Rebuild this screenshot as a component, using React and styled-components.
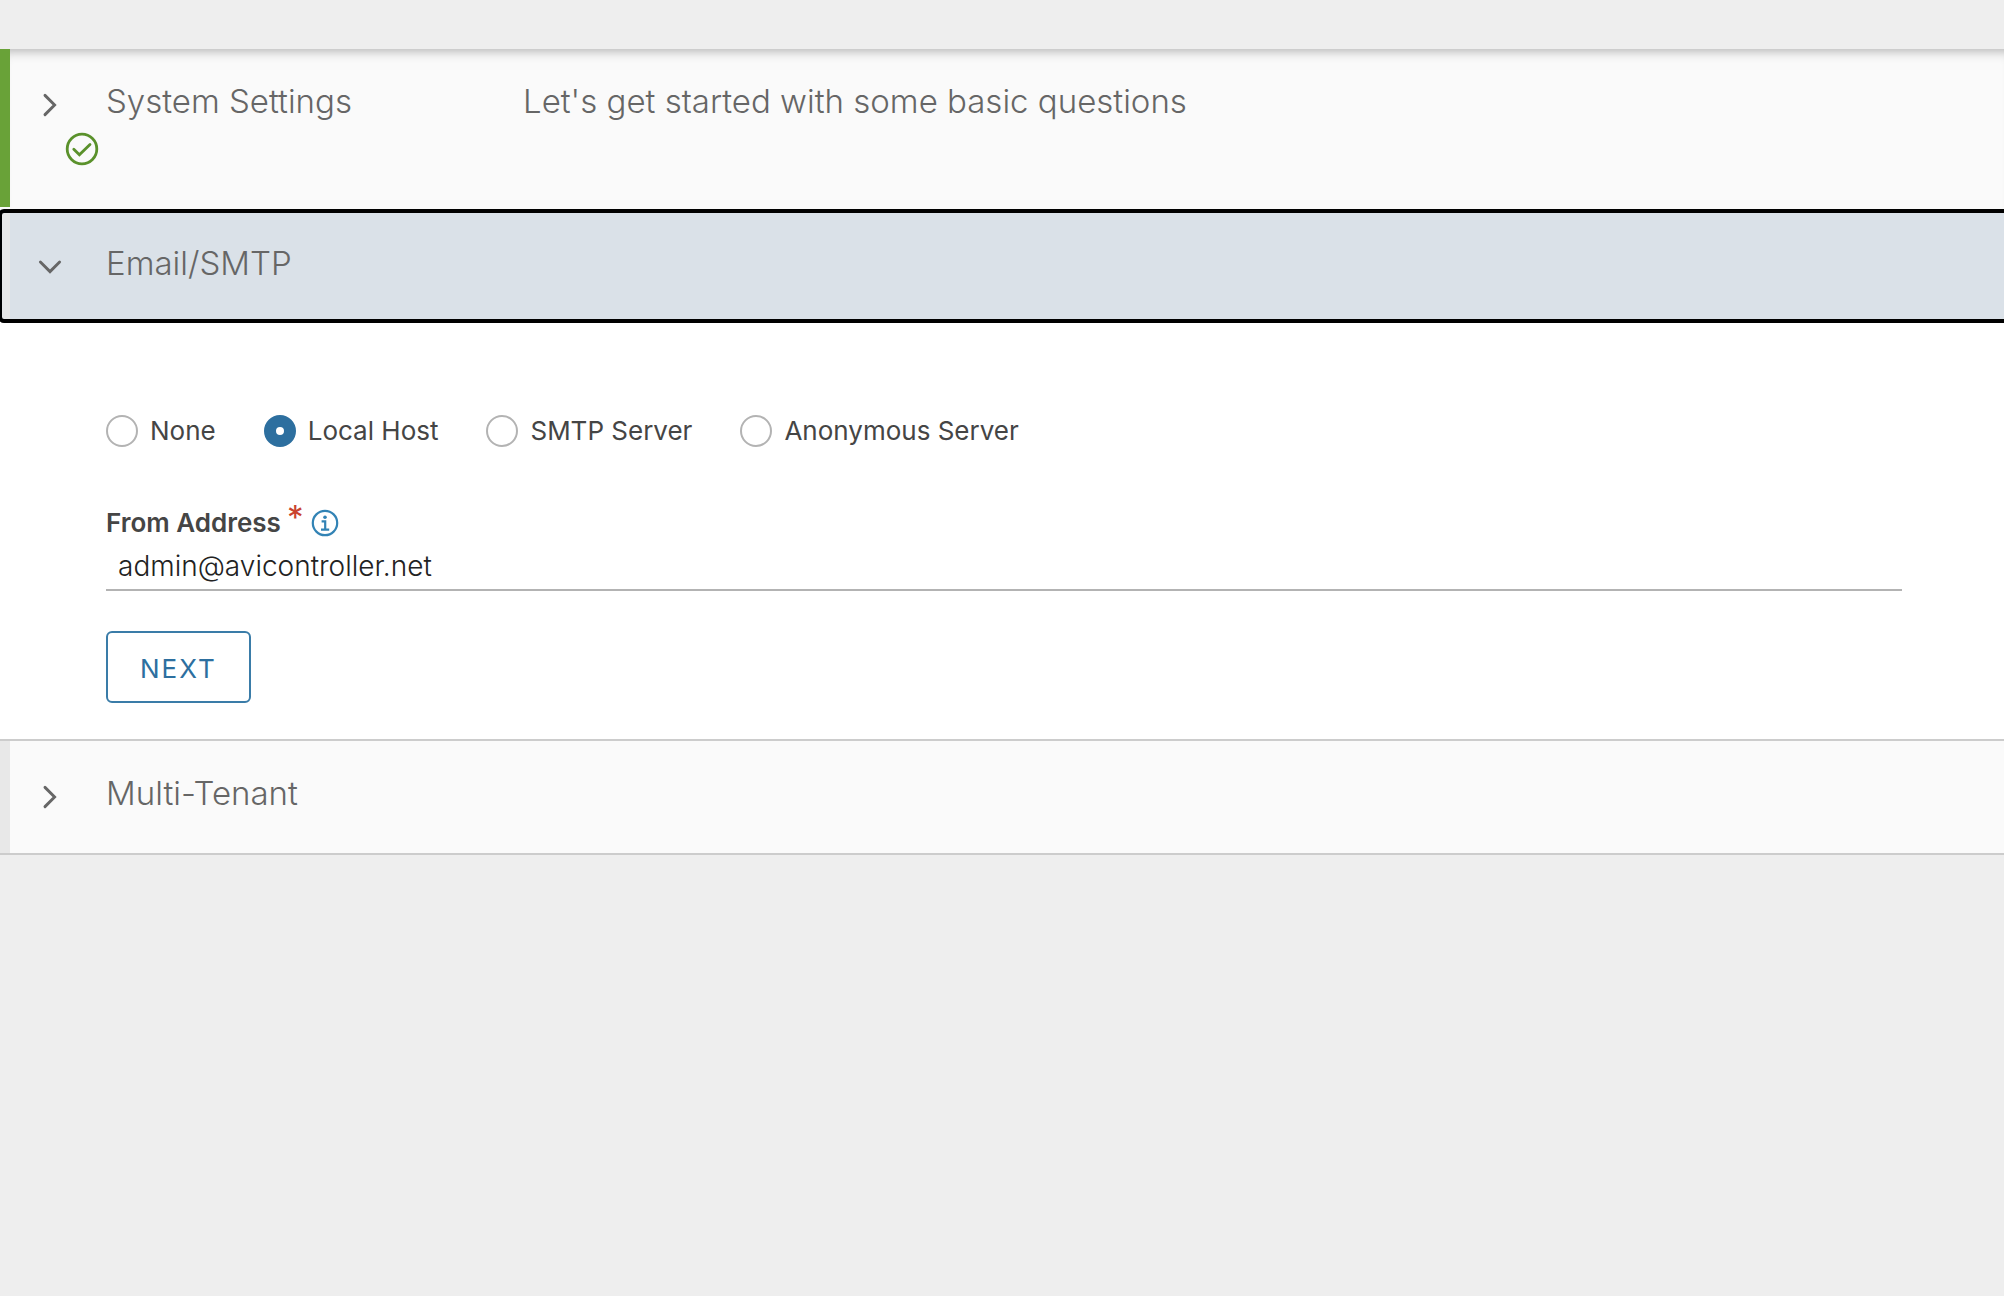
import React, { useState } from "react";
import styled, { createGlobalStyle } from "styled-components";

const GlobalStyle = createGlobalStyle`
	* {
		box-sizing: border-box;
	}

	body {
		margin: 0;
		background-color: #eeeeee;
		font-family: Inter, "Open Sans", sans-serif;
		color: #454545;
	}
`;

const StyledPage = styled.main`
	padding-top: 49px;
	overflow: hidden;
`;

const StyledPanel = styled.section`
	border-bottom: 2px solid ${(props) => (props.$done ? "#fafafa" : "#cccccc")};
	background-color: #ffffff;
`;

const StyledHeader = styled.button`
	display: grid;
	grid-template-columns: 96px 417px 1fr;
	align-items: start;
	width: 100%;
	padding: 32px 0 40px;
	border: 0;
	border-left: 10px solid ${(props) => (props.$done ? "#69a238" : "#e8e8e8")};
	background-color: #fafafa;
	box-shadow: ${(props) =>
		props.$first ? "inset 0 12px 12px -10px rgba(0, 0, 0, 0.3)" : "none"};
	font-family: inherit;
	font-size: 33px;
	font-weight: 300;
	line-height: 40px;
	color: #666666;
	text-align: left;
	cursor: pointer;
`;

const StyledOpenHeader = styled(StyledHeader)`
	width: calc(100% + 4px);
	margin-top: 2px;
	padding-bottom: 38px;
	border-left-color: #e8e8e8;
	border-radius: 4px;
	background-color: #dae1e8;
	outline: 4px solid #000000;
	outline-offset: -2px;
`;

const StyledStatus = styled.span`
	display: flex;
	flex-direction: column;
	padding: 4px 0 0 20px;
	margin-bottom: -4px;
`;

const StyledCaret = styled.svg`
	width: 40px;
	height: 40px;
	transform: rotate(${(props) => (props.$open ? "90deg" : "0deg")});
`;

const StyledCheck = styled.svg`
	width: 36px;
	height: 36px;
	margin: 6px 0 4px 34px;
`;

const StyledBody = styled.form`
	padding: 94px 102px 36px 106px;
`;

const StyledRadioGroup = styled.div`
	display: flex;
	flex-wrap: wrap;
	gap: 48px;
`;

const StyledRadioLabel = styled.label`
	display: flex;
	align-items: center;
	gap: 12px;
	font-size: 26px;
	line-height: 32px;
`;

const StyledRadio = styled.input`
	appearance: none;
	width: 32px;
	height: 32px;
	margin: 0;
	border: 2px solid #b3b3b3;
	border-radius: 50%;
	background-color: #ffffff;

	&:checked {
		border: 12px solid #2d6f9f;
	}
`;

const StyledField = styled.div`
	display: flex;
	flex-direction: column;
	margin-top: 60px;
`;

const StyledFieldHead = styled.div`
	display: flex;
	align-items: center;
	font-size: 26px;
	line-height: 32px;

	label {
		font-weight: 600;
	}

	svg {
		width: 28px;
		height: 28px;
	}
`;

const StyledRequired = styled.span`
	align-self: flex-start;
	margin: 0 8px 0 6px;
	font-size: 33px;
	font-weight: 400;
	line-height: 20px;
	color: #c9432f;
`;

const StyledInput = styled.input`
	width: 100%;
	height: 48px;
	margin-top: 4px;
	padding: 0 12px;
	border: 0;
	border-bottom: 2px solid #b3b3b3;
	background: none;
	font-family: inherit;
	font-size: 28px;
	font-weight: 300;
	color: #222222;
	outline: none;
`;

const StyledNext = styled.button`
	height: 72px;
	margin-top: 40px;
	padding: 2px 32px 0;
	border: 2px solid #3a7ca8;
	border-radius: 6px;
	background-color: #ffffff;
	font-family: inherit;
	font-size: 26px;
	letter-spacing: 2px;
	color: #2d6f9f;
	cursor: pointer;
`;

const Caret = ({ open }) => (
	<StyledCaret $open={open} viewBox="0 0 40 40" fill="none" aria-hidden="true">
		<path
			d="M15 10.4l9.6 9.6-9.6 9.6"
			stroke="#666666"
			strokeWidth="2.9"
			strokeLinecap="round"
		/>
	</StyledCaret>
);

const Check = () => (
	<StyledCheck viewBox="0 0 36 36" fill="none" aria-hidden="true">
		<circle cx="18" cy="18" r="14.8" stroke="#5a912b" strokeWidth="2.8" />
		<path
			d="M9.8 18.2l5.6 5.6L26 13.4"
			stroke="#5a912b"
			strokeWidth="2.8"
			strokeLinecap="round"
		/>
	</StyledCheck>
);

const Info = () => (
	<svg viewBox="0 0 28 28" fill="none" role="img" aria-label="Info">
		<circle cx="14" cy="14" r="12.2" stroke="#3283b5" strokeWidth="2.2" />
		<circle cx="14" cy="8.2" r="1.8" fill="#3283b5" />
		<path d="M10.6 12.4h3.6v8M10 20.6h8.2" stroke="#3283b5" strokeWidth="2.2" />
	</svg>
);

const options = ["None", "Local Host", "SMTP Server", "Anonymous Server"];

const App = () => {
	const [source, setSource] = useState("Local Host");
	const [address, setAddress] = useState("admin@avicontroller.net");

	return (
		<>
			<GlobalStyle />
			<StyledPage>
				<StyledPanel $done>
					<StyledHeader type="button" aria-expanded="false" $done $first>
						<StyledStatus>
							<Caret />
							<Check />
						</StyledStatus>
						<span>System Settings</span>
						<span>Let's get started with some basic questions</span>
					</StyledHeader>
				</StyledPanel>

				<StyledPanel>
					<StyledOpenHeader type="button" aria-expanded="true">
						<StyledStatus>
							<Caret open />
						</StyledStatus>
						<span>Email/SMTP</span>
					</StyledOpenHeader>

					<StyledBody onSubmit={(e) => e.preventDefault()}>
						<StyledRadioGroup role="radiogroup" aria-label="Email/SMTP">
							{options.map((option) => (
								<StyledRadioLabel key={option}>
									<StyledRadio
										type="radio"
										name="source"
										checked={source === option}
										onChange={() => setSource(option)}
									/>
									{option}
								</StyledRadioLabel>
							))}
						</StyledRadioGroup>

						<StyledField>
							<StyledFieldHead>
								<label htmlFor="from-address">From Address</label>
								<StyledRequired>*</StyledRequired>
								<Info />
							</StyledFieldHead>
							<StyledInput
								id="from-address"
								type="text"
								value={address}
								onChange={(e) => setAddress(e.target.value)}
							/>
						</StyledField>

						<StyledNext type="submit">NEXT</StyledNext>
					</StyledBody>
				</StyledPanel>

				<StyledPanel>
					<StyledHeader type="button" aria-expanded="false">
						<StyledStatus>
							<Caret />
						</StyledStatus>
						<span>Multi-Tenant</span>
					</StyledHeader>
				</StyledPanel>
			</StyledPage>
		</>
	);
};

export default App;
